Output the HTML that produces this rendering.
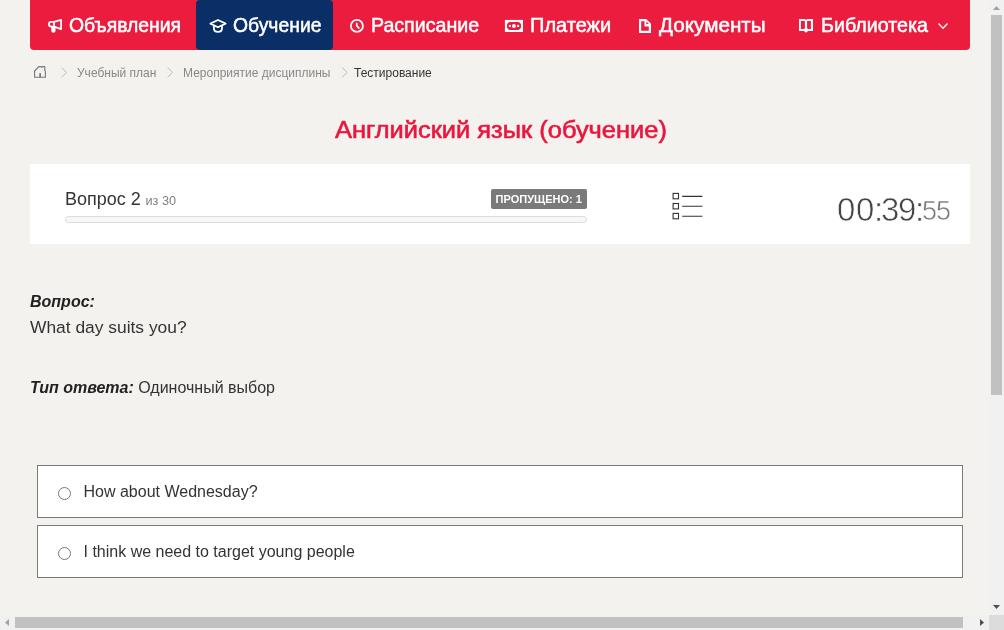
<!DOCTYPE html>
<html><head><meta charset="utf-8">
<style>
html,body{margin:0;padding:0;width:1004px;height:630px;overflow:hidden;background:#f3f2ef;font-family:"Liberation Sans",sans-serif;}
.a{position:absolute;white-space:nowrap;}
#nav{position:absolute;left:30px;top:0;width:940px;height:50px;background:#ec1c3f;border-radius:0 0 4px 4px;}
#act{position:absolute;left:196px;top:0;width:137px;height:50px;background:#0a2f66;border-radius:4px;}
.nt{position:absolute;top:13px;color:#fff;font-size:20px;line-height:24px;transform-origin:0 0;-webkit-text-stroke:0.5px #fff;white-space:nowrap;}
.ic{position:absolute;overflow:visible;}
.bc{position:absolute;top:66px;font-size:12px;line-height:14px;color:#888;white-space:nowrap;}
#card{position:absolute;left:30px;top:164px;width:940px;height:80px;background:#fff;}
.opt{position:absolute;left:37px;width:924px;height:51px;border:1px solid #7a7a7a;background:#fff;}
.radio{position:absolute;left:20px;top:21px;width:11px;height:11px;border:1px solid #777;border-radius:50%;background:#fff;}
.ot{position:absolute;left:45.5px;top:17px;font-size:16px;line-height:18px;color:#333;white-space:nowrap;}
.tm{top:192px;font-size:33px;line-height:36px;color:#444;-webkit-text-stroke:0.6px #fff;}
.tm2{top:196px;font-size:27px;line-height:30px;color:#777;-webkit-text-stroke:0.5px #fff;}
</style></head><body><div id="root" style="position:absolute;left:0;top:0;width:1004px;height:630px;will-change:transform">

<div id="nav"></div>
<div id="act"></div>

<!-- megaphone -->
<svg class="ic" style="left:47px;top:17px" width="16" height="17" viewBox="0 0 16 17">
<path d="M7 4.9L14.1 2.9V12.1L7 9.6Z" fill="none" stroke="#fff" stroke-width="1.8" stroke-linejoin="round"/>
<path d="M7 4.9H4.3A2.35 2.35 0 0 0 4.3 9.6H7" fill="none" stroke="#fff" stroke-width="1.8"/>
<path d="M4.3 9.5V13.8A2.1 2 0 0 0 8.5 13.8V9.5Z" fill="#fff"/>
</svg>
<div class="nt" id="n1" style="left:69px;transform:scaleX(0.969)">Объявления</div>

<!-- graduation cap -->
<svg class="ic" style="left:207px;top:16px" width="22" height="20" viewBox="0 0 22 20">
<path d="M3.4 7.6L11 4L18.6 7.6L11 11.2Z" fill="none" stroke="#fff" stroke-width="1.8" stroke-linejoin="round"/>
<path d="M6.9 9.4V12.6Q6.9 15.9 11 15.9Q15 15.9 15 12.6V9.4" fill="none" stroke="#fff" stroke-width="1.8"/>
</svg>
<div class="nt" id="n2" style="left:233px;transform:scaleX(0.967)">Обучение</div>

<!-- clock -->
<svg class="ic" style="left:344px;top:16px" width="20" height="20" viewBox="0 0 20 20">
<circle cx="12.9" cy="9.95" r="6" fill="none" stroke="#fff" stroke-width="1.8"/>
<path d="M12.7 7.4V9.6L14.9 12.1" fill="none" stroke="#fff" stroke-width="1.6" stroke-linecap="round"/>
</svg>
<div class="nt" id="n3" style="left:371px;transform:scaleX(0.98)">Расписание</div>

<!-- money -->
<svg class="ic" style="left:504px;top:18px" width="20" height="16" viewBox="0 0 20 16">
<rect x="0.9" y="1.9" width="18.1" height="12.1" fill="#fff"/>
<path d="M5.1 3.9H14.9L17 6.1V9.7L14.9 11.9H5.1L3 9.7V6.1Z" fill="#ec1c3f"/>
<rect x="4.9" y="6.9" width="2.1" height="2.1" fill="#fff"/>
<circle cx="9.9" cy="8" r="1.9" fill="#fff"/>
<rect x="13" y="6.9" width="2.1" height="2.1" fill="#fff"/>
</svg>
<div class="nt" id="n4" style="left:530px">Платежи</div>

<!-- document -->
<svg class="ic" style="left:638px;top:18px" width="14" height="16" viewBox="0 0 14 16">
<path d="M1 1H8.2L13 5.8V14.9H1Z" fill="#fff"/>
<path d="M3.2 3.2H6.5V8.5H10.8V12.7H3.2Z" fill="#ec1c3f"/>
<path d="M8.3 3.5L10.8 6H8.3Z" fill="#ec1c3f"/>
</svg>
<div class="nt" id="n5" style="left:659px;transform:scaleX(1.035)">Документы</div>

<!-- book -->
<svg class="ic" style="left:798px;top:18px" width="16" height="16" viewBox="0 0 16 16">
<path d="M1 1H6.8L8 1.9L9.2 1H15V12.9H10L8 14.8L6 12.9H1Z" fill="#fff"/>
<path d="M2.9 3.1H6.9V10.3L5.9 11H2.9Z" fill="#ec1c3f"/>
<path d="M9.1 3.1H12.9V11H10.1L9.1 10.3Z" fill="#ec1c3f"/>
</svg>
<div class="nt" id="n6" style="left:821px;transform:scaleX(0.984)">Библиотека</div>

<!-- chevron down -->
<svg class="ic" style="left:936px;top:21px" width="14" height="10" viewBox="0 0 14 10">
<path d="M2.5 2.5L7 7.2L11.5 2.5" fill="none" stroke="#fff" stroke-width="1.3"/>
</svg>

<!-- breadcrumb -->
<svg class="ic" style="left:30px;top:62px" width="20" height="20" viewBox="0 0 20 20">
<path d="M4.6 15.2V9L8.8 4.6H11L11.8 5.5L12.6 4.6H14.8V8.6L15.4 9.2V15.2Z" fill="none" stroke="#777" stroke-width="1.1" stroke-linejoin="round"/>
<rect x="9.3" y="11.2" width="1.7" height="4" fill="#777"/>
</svg>
<svg class="ic" style="left:56px;top:62px" width="400" height="20" viewBox="0 0 400 20">
<path d="M5.6 5.5L10.5 10.4L5.6 15.3M111.6 5.5L116.5 10.4L111.6 15.3M286.2 5.5L291.1 10.4L286.2 15.3" fill="none" stroke="#bbb" stroke-width="1"/>
</svg>
<div class="bc" style="left:77px">Учебный план</div>
<div class="bc" style="left:183px">Мероприятие дисциплины</div>
<div class="bc" style="left:354px;color:#333">Тестирование</div>

<div class="a" style="left:334.5px;top:116px;font-size:23.3px;line-height:28px;color:#ea163d;transform:scaleX(1.092);transform-origin:0 0;-webkit-text-stroke:0.6px #ea163d">Английский язык (обучение)</div>

<div id="card"></div>
<div class="a" style="left:65px;top:189px;font-size:18px;line-height:20px;color:#333">Вопрос 2 <span style="font-size:12.7px;color:#808080;margin-left:-0.3px">из 30</span></div>
<div class="a" style="left:65px;top:216px;width:520px;height:5px;border:1px solid #dcdcdc;border-radius:4px;background:#f7f7f7"></div>
<div class="a" style="left:491px;top:189px;width:96px;height:20px;background:#7a7a7a;border-radius:2px"></div>
<div class="a" style="left:495.6px;top:192px;font-size:11px;line-height:14px;font-weight:bold;color:#fff">ПРОПУЩЕНО: 1</div>

<!-- list icon -->
<svg class="ic" style="left:670px;top:190px" width="36" height="32" viewBox="0 0 36 32">
<rect x="3.1" y="3.4" width="5.4" height="5.4" fill="none" stroke="#333" stroke-width="1.1"/>
<rect x="3.1" y="13.5" width="5.4" height="5.4" fill="none" stroke="#333" stroke-width="1.1"/>
<rect x="3.1" y="23.4" width="5.4" height="5.4" fill="none" stroke="#333" stroke-width="1.1"/>
<path d="M12.2 6.4H32.4M12.2 16.3H32.4M12.2 26.2H32.4" stroke="#333" stroke-width="1.1"/>
</svg>

<div class="a tm" style="left:837px">0</div><div class="a tm" style="left:856px">0</div><div class="a tm" style="left:874px">:</div><div class="a tm" style="left:881px">3</div><div class="a tm" style="left:898px">9</div><div class="a tm" style="left:915px">:</div><div class="a tm2" style="left:922px">5</div><div class="a tm2" style="left:936px">5</div>

<div class="a" style="left:30px;top:293px;font-size:16px;line-height:18px;color:#222;font-weight:bold;font-style:italic">Вопрос:</div>
<div class="a" style="left:30px;top:317px;font-size:17.4px;line-height:20px;color:#333">What day suits you?</div>
<div class="a" style="left:30px;top:379px;font-size:16px;line-height:18px;color:#333"><b style="color:#222"><i>Тип ответа:</i></b> Одиночный выбор</div>

<div class="opt" style="top:465px"><div class="radio"></div><div class="ot">How about Wednesday?</div></div>
<div class="opt" style="top:525px"><div class="radio"></div><div class="ot">I think we need to target young people</div></div>

<!-- scrollbars -->
<div class="a" style="left:989px;top:0;width:15px;height:615px;background:#f1f1f1"></div>
<div class="a" style="left:991px;top:15px;width:11px;height:380px;background:#c1c1c1"></div>
<div class="a" style="left:0;top:615px;width:989px;height:15px;background:#f1f1f1"></div>
<div class="a" style="left:15px;top:617px;width:948px;height:11px;background:#c1c1c1"></div>
<div class="a" style="left:989px;top:615px;width:15px;height:15px;background:#dcdcdc"></div>
<svg class="a" style="left:989px;top:0" width="15" height="630" viewBox="0 0 15 630">
<path d="M4 10h7l-3.5-4z" fill="#a3a3a3"/>
<path d="M4 605h7l-3.5 4z" fill="#505050"/>
</svg>
<svg class="a" style="left:0;top:615px" width="989" height="15" viewBox="0 0 989 15">
<path d="M9 4v7l-4-3.5z" fill="#a3a3a3"/>
<path d="M980 4v7l4-3.5z" fill="#505050"/>
</svg>
</div></body></html>
